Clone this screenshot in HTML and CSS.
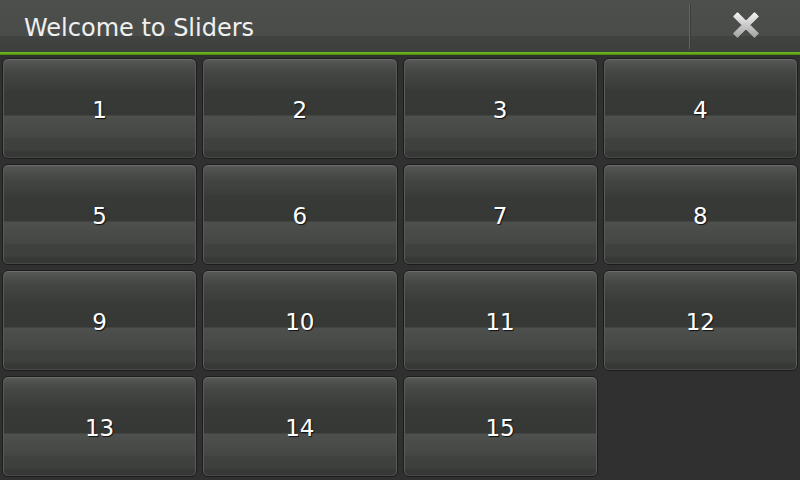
FILE: index.html
```html
<!DOCTYPE html>
<html>
<head>
<meta charset="utf-8">
<link rel="stylesheet" href="styles.css">
</head>
<body>
<div class="app">
  <header class="titlebar">
    <div class="title">Welcome to Sliders</div>
    <div class="close">
      <svg width="28" height="28" viewBox="0 0 28 28">
        <defs>
          <linearGradient id="xg" x1="0" y1="0" x2="0" y2="1">
            <stop offset="0" stop-color="#f2f2f2"/>
            <stop offset="1" stop-color="#a4a4a4"/>
          </linearGradient>
        </defs>
        <path d="M5.5 2 L14 10.5 L22.5 2 L26 5.5 L17.5 14 L26 22.5 L22.5 26 L14 17.5 L5.5 26 L2 22.5 L10.5 14 L2 5.5 Z" fill="#252725" opacity="0.6" transform="translate(0.8 0.8)"/>
        <path d="M5.5 2 L14 10.5 L22.5 2 L26 5.5 L17.5 14 L26 22.5 L22.5 26 L14 17.5 L5.5 26 L2 22.5 L10.5 14 L2 5.5 Z" fill="url(#xg)" stroke-linejoin="round" stroke="url(#xg)" stroke-width="1.5"/>
      </svg>
    </div>
  </header>
  <main class="grid">
    <button class="tile">1</button>
    <button class="tile">2</button>
    <button class="tile">3</button>
    <button class="tile">4</button>
    <button class="tile">5</button>
    <button class="tile">6</button>
    <button class="tile">7</button>
    <button class="tile">8</button>
    <button class="tile">9</button>
    <button class="tile">10</button>
    <button class="tile">11</button>
    <button class="tile">12</button>
    <button class="tile">13</button>
    <button class="tile">14</button>
    <button class="tile">15</button>
  </main>
</div>
</body>
</html>
```
FILE: styles.css
```css
* { box-sizing: border-box; }
html, body {
  margin: 0;
  padding: 0;
  width: 800px;
  height: 480px;
  overflow: hidden;
  background: #303030;
  font-family: "DejaVu Sans", sans-serif;
}
.app {
  display: flex;
  flex-direction: column;
  height: 480px;
}
.titlebar {
  height: 55px;
  display: flex;
  align-items: stretch;
  background: linear-gradient(to bottom, #4c4f4c 0px, #494c49 36px, #414341 36px, #3e403e 52px, #6cb31a 52px, #64a818 54px, #3f6e0c 55px);
}
.title {
  flex: 1;
  padding-left: 24px;
  padding-top: 14px;
  font-size: 24px;
  color: #f0f0f0;
}
.close {
  width: 111px;
  display: flex;
  align-items: flex-start;
  justify-content: center;
  padding-top: 11px;
  padding-left: 2px;
  margin: 4px 0 6px 0;
  border-left: 1px solid #626562;
  box-shadow: inset 1px 0 0 #3a3c3a;
}
.close svg { display: block; margin-top: -4px; }
.grid {
  flex: 1;
  display: grid;
  grid-template-columns: repeat(4, 1fr);
  grid-template-rows: repeat(4, 101px);
  gap: 5px;
  padding: 3px 2px;
}
.tile {
  margin: 0;
  padding: 0;
  border: 1px solid #1b1c1b;
  border-radius: 6px;
  font-family: "DejaVu Sans", sans-serif;
  font-size: 23px;
  color: #ffffff;
  text-shadow: 1px 1px 1px #111;
  box-shadow: inset 0 1px 0 #6c6e6c, inset 1px 0 0 #5a5c5a, inset -1px 0 0 #5a5c5a, inset 0 -1px 0 #464846;
  background: linear-gradient(to bottom,
    #585a58 0px,
    #4c4e4c 7px,
    #434543 15px,
    #3c3e3c 28px,
    #383a38 32px,
    #363836 56px,
    #4e504e 57px,
    #4a4c4a 66px,
    #454745 78px,
    #3f413f 80px,
    #3e403e 91px,
    #373937 93px,
    #363836 100px);
  padding-top: 2px;
}
```
